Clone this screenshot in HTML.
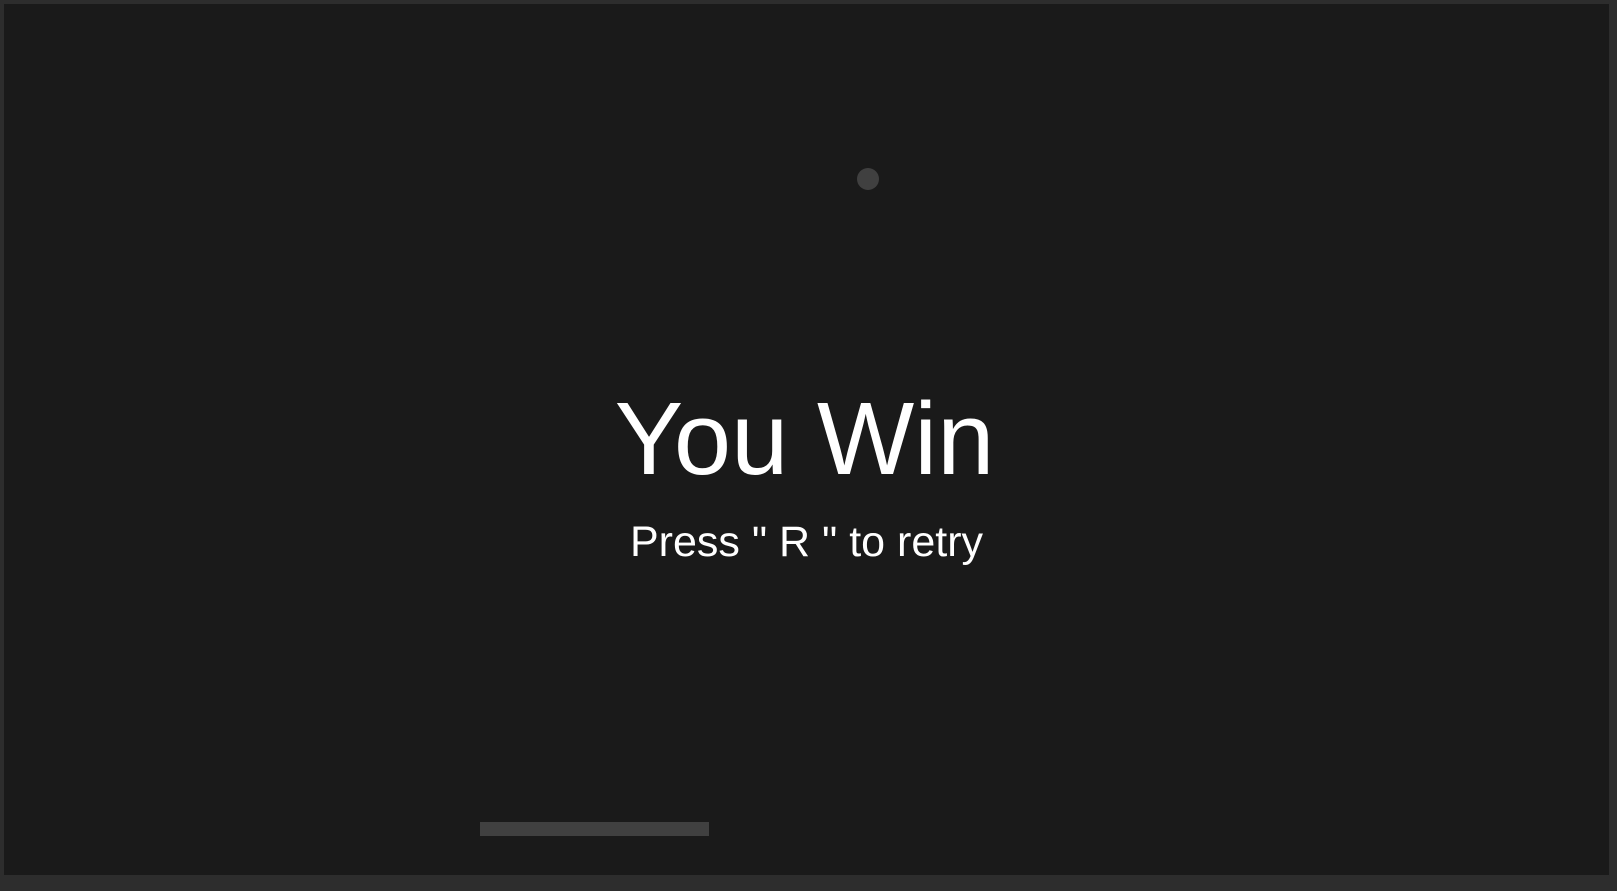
<!DOCTYPE html>
<html><head><style>
html,body{margin:0;padding:0;}
body{width:1617px;height:891px;background:#2d2d2d;position:relative;overflow:hidden;font-family:"Liberation Sans",Arial,sans-serif;}
#game{position:absolute;left:4px;top:4px;width:1605px;height:871px;background:#1a1a1a;}
.t{position:absolute;left:0;width:1617px;text-align:center;color:#fff;white-space:nowrap;}
</style></head><body>
<div id="game"></div>
<div style="position:absolute;left:857px;top:168px;width:22px;height:22px;border-radius:50%;background:#404040"></div>
<div style="position:absolute;left:480px;top:822px;width:229px;height:14px;background:#404040"></div>
<div class="t" style="top:379px;font-size:103px;line-height:120px;left:-4px;">You Win</div>
<div class="t" style="top:519px;font-size:43px;line-height:46px;left:-2px;">Press " R " to retry</div>
</body></html>
